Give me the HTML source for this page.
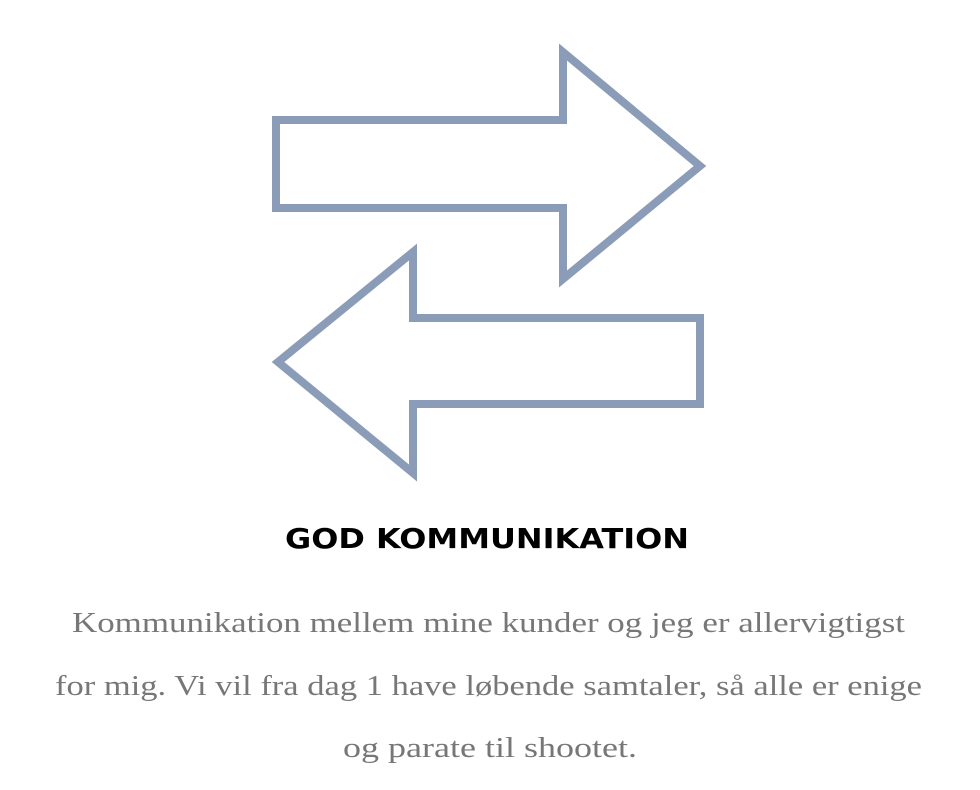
<!DOCTYPE html>
<html><head><meta charset="utf-8"><style>html,body{margin:0;padding:0;background:#fff;}svg{display:block}</style></head>
<body>
<svg width="980" height="790" viewBox="0 0 980 790" xmlns="http://www.w3.org/2000/svg">
<g fill="none" stroke="#8a9cb8" stroke-width="8" stroke-linejoin="miter" stroke-miterlimit="4">
<polygon points="276,120 563,120 563,52 700,166 563,279 563,208 276,208"/>
<polygon points="278,362 413,252 413,318 700,318 700,404 413,404 413,473"/>
</g>
<text x="487" y="548" text-anchor="middle" font-family="DejaVu Sans, Liberation Sans, sans-serif" font-weight="bold" font-size="28" textLength="404" lengthAdjust="spacingAndGlyphs" fill="#000">GOD KOMMUNIKATION</text>
<g font-family="Liberation Serif, serif" font-size="29" fill="#777">
<text x="72" y="632" textLength="833" lengthAdjust="spacingAndGlyphs">Kommunikation mellem mine kunder og jeg er allervigtigst</text>
<text x="55" y="695" textLength="867" lengthAdjust="spacingAndGlyphs">for mig. Vi vil fra dag 1 have løbende samtaler, så alle er enige</text>
<text x="343" y="757" textLength="294" lengthAdjust="spacingAndGlyphs">og parate til shootet.</text>
</g>
</svg>
</body></html>
